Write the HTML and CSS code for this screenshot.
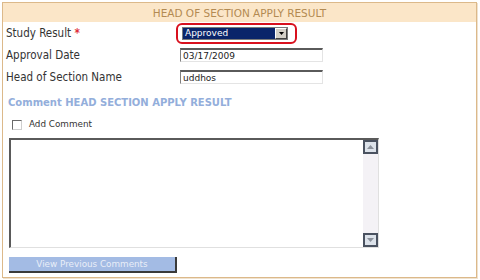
FILE: index.html
```html
<!DOCTYPE html>
<html lang="en">
<head>
    <meta charset="UTF-8">
    <title>Head of Section Apply Result</title>
    <link rel="stylesheet" href="styles.css">
</head>
<body>
    <div class="panel">
        <div class="panel-header">HEAD OF SECTION APPLY RESULT</div>
        <div class="panel-body">
            <div class="form-grid">
                <label class="field-label">Study Result <span class="required">*</span></label>
                <div class="field">
                    <div class="highlight">
                        <div class="fake-select">
                            <span class="select-value">Approved</span>
                            <span class="select-button">
                                <svg width="5" height="3" viewBox="0 0 5 3"><path d="M0 0h5L2.5 3z" fill="#000"/></svg>
                            </span>
                        </div>
                    </div>
                </div>

                <label class="field-label">Approval Date</label>
                <div class="field"><input type="text" class="text-input" value="03/17/2009"></div>

                <label class="field-label">Head of Section Name</label>
                <div class="field"><input type="text" class="text-input" value="uddhos"></div>
            </div>

            <h2 class="section-title">Comment HEAD SECTION APPLY RESULT</h2>

            <label class="check-row">
                <span class="checkbox"></span>
                <span>Add Comment</span>
            </label>

            <div class="comment-box">
                <textarea class="comment-text"></textarea>
                <div class="scrollbar">
                    <span class="scroll-btn">
                        <svg width="7" height="4" viewBox="0 0 7 4"><path d="M0 4h7L3.5 0z" fill="#8a909a"/></svg>
                    </span>
                    <span class="scroll-track"></span>
                    <span class="scroll-btn">
                        <svg width="7" height="4" viewBox="0 0 7 4"><path d="M0 0h7L3.5 4z" fill="#8a909a"/></svg>
                    </span>
                </div>
            </div>

            <button type="button" class="prev-button">View Previous Comments</button>
        </div>
    </div>
</body>
</html>
```

FILE: styles.css
```css
:root {
    --panel-border: #dcb98a;
    --header-bg: #fbe6c8;
    --header-text: #b38a52;
    --label-text: #333333;
    --accent-blue: #93aedb;
}
* {
    margin: 0;
    padding: 0;
    box-sizing: border-box;
}
body {
    font-family: "DejaVu Sans", Verdana, sans-serif;
    background: #ffffff;
    padding: 2px 3px 3px 2px;
    width: 480px;
    height: 280px;
}
.panel {
    border: 1px solid var(--panel-border);
    height: 276px;
    box-shadow: 1px 1px 0 #efe2cf;
}
.panel-header {
    background: var(--header-bg);
    color: var(--header-text);
    font-size: 10.5px;
    text-align: center;
    height: 19px;
    line-height: 20px;
}
.panel-body {
    padding: 0 3px;
}
.form-grid {
    display: grid;
    grid-template-columns: 174px 1fr;
    grid-auto-rows: 22px;
    align-items: center;
}
.field-label {
    font-family: "DejaVu Sans Condensed", "DejaVu Sans", sans-serif;
    font-stretch: condensed;
    font-size: 11.5px;
    color: var(--label-text);
}
.required {
    color: #e0303a;
    font-weight: bold;
}
.field {
    display: flex;
    align-items: center;
}
.highlight {
    border: 2px solid #d8101e;
    border-radius: 6px;
    padding: 2px 7px 2px 4px;
    margin-left: -4px;
}
.fake-select {
    display: flex;
    width: 106px;
    height: 13px;
    background: #0a246a;
    border: 1px solid #7a7a7a;
}
.select-value {
    flex: 1;
    color: #ffffff;
    font-size: 9px;
    line-height: 11px;
    padding-left: 2px;
}
.select-button {
    width: 12px;
    background: #d4d0c8;
    border: 1px solid;
    border-color: #ffffff #404040 #404040 #ffffff;
    display: flex;
    align-items: center;
    justify-content: center;
}
.text-input {
    width: 143px;
    height: 14px;
    font-family: "DejaVu Sans", Verdana, sans-serif;
    font-size: 9px;
    color: #222;
    padding: 0 2px;
    border: 1px solid;
    border-color: #5a5a5a #e4e4e4 #e4e4e4 #808080;
    border-top-width: 2px;
    outline: none;
}
.section-title {
    font-size: 10px;
    line-height: 12px;
    font-weight: bold;
    color: var(--accent-blue);
    margin: 9px 0 0 2px;
}
.check-row {
    display: flex;
    align-items: center;
    gap: 7px;
    font-size: 8.8px;
    line-height: 11px;
    color: #333;
    margin: 10px 0 0 6px;
}
.checkbox {
    width: 10px;
    height: 10px;
    border: 1px solid;
    border-color: #6a6a6a #cfcfcf #cfcfcf #6a6a6a;
    background: #fff;
}
.comment-box {
    display: flex;
    width: 370px;
    height: 110px;
    margin: 8px 0 0 3px;
    border: 1px solid;
    border-color: #5a5a5a #e0e0e0 #e0e0e0 #5a5a5a;
    border-top-width: 2px;
    border-left-width: 2px;
}
.comment-text {
    flex: 1;
    border: none;
    resize: none;
    outline: none;
}
.scrollbar {
    width: 15px;
    display: flex;
    flex-direction: column;
    background: #f4f2f6;
}
.scroll-btn {
    height: 14px;
    background: #dce2ea;
    border: 2px solid #4a5260;
    display: flex;
    align-items: center;
    justify-content: center;
}
.scroll-track {
    flex: 1;
}
.prev-button {
    display: block;
    width: 168px;
    height: 16px;
    margin: 9px 0 0 3px;
    background: #a3bbe4;
    color: #e9eef8;
    font-family: "DejaVu Sans", Verdana, sans-serif;
    font-size: 8.8px;
    border: none;
    border-right: 2px solid #3a3a3a;
    border-bottom: 2px solid #3a3a3a;
}
```
